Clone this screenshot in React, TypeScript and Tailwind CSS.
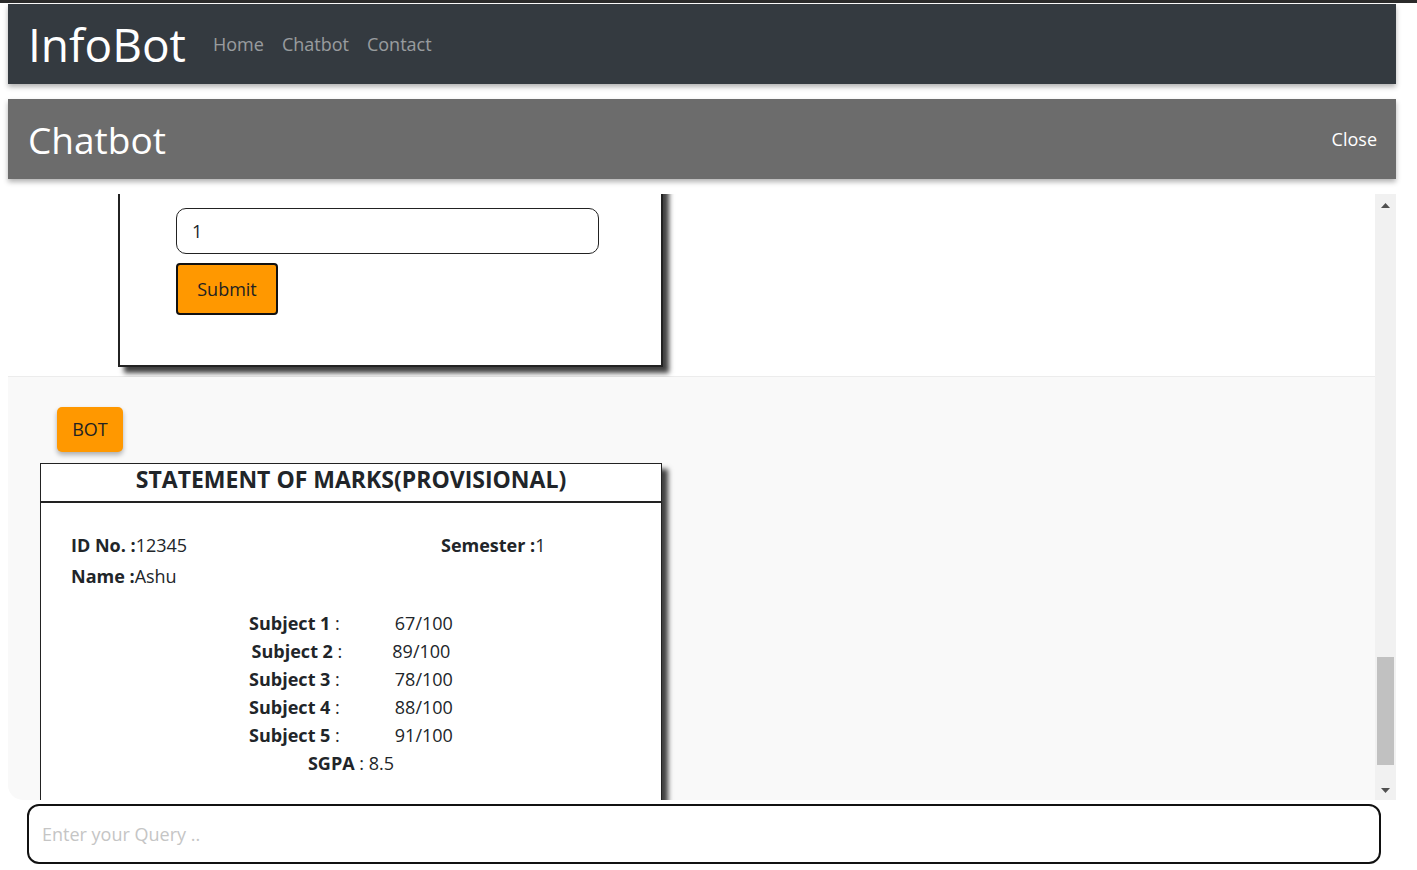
import React, { useLayoutEffect, useRef } from 'react'

const subjects = [
  { name: 'Subject 1', marks: '67/100', gap: 'ml-[55px]' },
  { name: 'Subject 2', marks: '89/100', gap: 'ml-[50px]' },
  { name: 'Subject 3', marks: '78/100', gap: 'ml-[55px]' },
  { name: 'Subject 4', marks: '88/100', gap: 'ml-[55px]' },
  { name: 'Subject 5', marks: '91/100', gap: 'ml-[55px]' },
]

function Navbar() {
  return (
    <nav className="flex h-[80px] items-center bg-[#343a40] px-5 shadow-[0_3px_5px_rgba(0,0,0,0.3)]">
      <a className="text-[46px] leading-none text-white">InfoBot</a>
      <div className="ml-[27px] flex gap-[18px] text-[18px] text-white/50">
        <a>Home</a>
        <a>Chatbot</a>
        <a>Contact</a>
      </div>
    </nav>
  )
}

function UserForm({ inputRef }: { inputRef: React.RefObject<HTMLInputElement | null> }) {
  return (
    <div className="border-b border-[#ececec] bg-white pb-[9px] pl-[110px]">
      <div className="w-[545px] border-2 border-[#222] bg-white px-[56px] pt-10 pb-[50px] shadow-[6px_6px_5px_rgba(0,0,0,0.75)]">
        <input
          ref={inputRef}
          defaultValue="1"
          className="block h-[46px] w-[423px] rounded-[10px] border border-[#222] px-[15px] text-[18px] text-[#212529] outline-none"
        />
        <button className="mt-[9px] h-[52px] w-[102px] rounded-[4px] border-2 border-[#111] bg-[#ff9800] text-[18px] text-[#222]">
          Submit
        </button>
      </div>
    </div>
  )
}

function Statement() {
  return (
    <div className="w-[622px] border border-[#222] bg-white text-[#212529] shadow-[6px_6px_5px_rgba(0,0,0,0.75)]">
      <h3 className="flex h-[39px] items-center justify-center border-b-2 border-[#222] pb-[6px] text-[23px] font-bold">
        STATEMENT OF MARKS(PROVISIONAL)
      </h3>
      <div className="px-[30px] pt-[27px] pb-[60px] text-[18px] leading-[31px]">
        <div className="grid grid-cols-[370px_1fr]">
          <p>
            <b>ID No. :</b>12345
          </p>
          <p>
            <b>Semester :</b>1
          </p>
          <p>
            <b>Name :</b>Ashu
          </p>
        </div>
        <div className="mt-[17px] leading-[28px]">
          {subjects.map((s) => (
            <p key={s.name} className="text-center">
              <b>{s.name}</b> :<span className={s.gap}>{s.marks}</span>
            </p>
          ))}
          <p className="text-center">
            <b>SGPA</b> : 8.5
          </p>
        </div>
      </div>
    </div>
  )
}

function Scrollbar() {
  return (
    <div className="flex w-[21px] shrink-0 flex-col items-center bg-[#f1f1f1]">
      <div className="flex h-[22px] w-full items-center justify-center">
        <svg width="9" height="5" viewBox="0 0 9 5">
          <path d="M0 5 L4.5 0 L9 5 Z" fill="#505050" />
        </svg>
      </div>
      <div className="flex-1">
        <div className="mt-[441px] h-[108px] w-[17px] bg-[#c1c1c1]" />
      </div>
      <div className="flex h-[20px] w-full items-center justify-center">
        <svg width="9" height="5" viewBox="0 0 9 5">
          <path d="M0 0 L9 0 L4.5 5 Z" fill="#505050" />
        </svg>
      </div>
    </div>
  )
}

export default function App() {
  const scrollRef = useRef<HTMLDivElement>(null)
  const inputRef = useRef<HTMLInputElement>(null)

  useLayoutEffect(() => {
    const box = scrollRef.current
    const input = inputRef.current
    if (!box || !input) return
    const offset = input.getBoundingClientRect().top - box.getBoundingClientRect().top
    box.scrollTop += offset - 14
  }, [])

  return (
    <div
      className="min-h-screen border-t-[3px] border-[#2b2b2b] bg-white"
      style={{ fontFamily: '"Open Sans", "Noto Sans", sans-serif' }}
    >
      <div className="mr-[21px] ml-2 pt-px">
        <Navbar />

        <div className="mt-[15px] flex h-[80px] items-center justify-between bg-[#6c6c6c] pr-[19px] pl-5 text-white shadow-[0_3px_5px_rgba(0,0,0,0.3)]">
          <h2 className="text-[37px] leading-none">Chatbot</h2>
          <button className="text-[18px]">Close</button>
        </div>

        <div className="mt-[15px] flex h-[606px]">
          <div ref={scrollRef} className="flex-1 overflow-hidden rounded-bl-[15px] bg-white">
            {/* earlier conversation */}
            <div className="h-[2300px] bg-white" />
            <UserForm inputRef={inputRef} />
            <div className="bg-[#f9f9f9] pt-[30px] pb-[40px] pl-[32px]">
              <button className="ml-[17px] h-[45px] w-[66px] rounded-[5px] bg-[#ff9800] text-[18px] text-[#222] shadow-[0_3px_5px_rgba(0,0,0,0.3)]">
                BOT
              </button>
              <div className="mt-[11px]">
                <Statement />
              </div>
            </div>
          </div>
          <Scrollbar />
        </div>

        <input
          placeholder="Enter your Query .."
          className="mt-1 ml-[19px] block h-[60px] w-[1354px] rounded-[12px] border-2 border-[#111] px-[13px] text-[18px] outline-none placeholder:text-[#c5c5c5]"
        />
      </div>
    </div>
  )
}
